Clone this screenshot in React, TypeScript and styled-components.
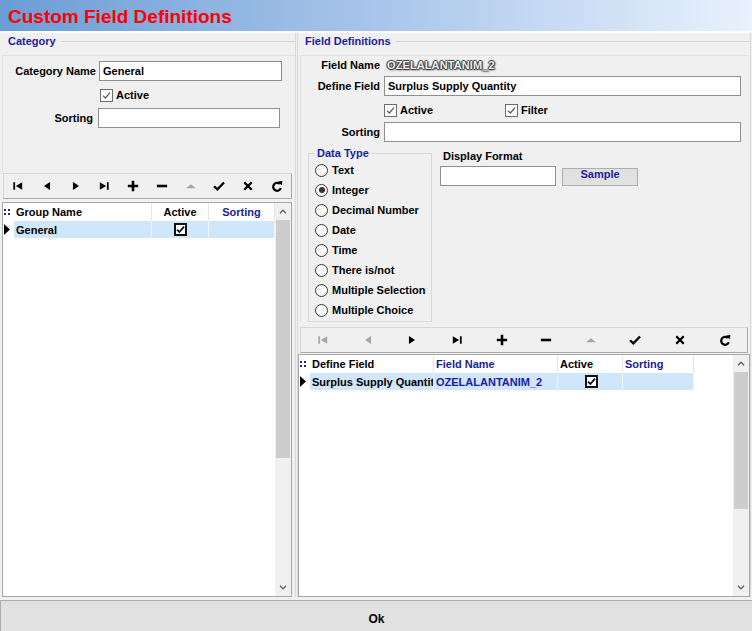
import React from "react";
import styled, { createGlobalStyle } from "styled-components";

const NAVY = "#1c1c9e";
const FONT = `"Liberation Sans", Arial, sans-serif`;

const GlobalStyle = createGlobalStyle`
  html, body {
    margin: 0;
    padding: 0;
    background: #f0f0f0;
  }
  body {
    font-family: ${FONT};
    font-size: 11px;
    font-weight: bold;
    color: #000;
  }
  * {
    box-sizing: border-box;
  }
`;

const Window = styled.div`
  width: 752px;
  height: 631px;
  display: flex;
  flex-direction: column;
  overflow: hidden;
  background: #f0f0f0;
`;

const TitleBar = styled.header`
  flex: none;
  height: 33px;
  border-bottom: 2px solid #fff;
  background: linear-gradient(90deg, #6b9dd6 0%, #a8c5ea 50%, #e9f2fd 100%);
  display: flex;
  align-items: center;
  padding: 2px 0 0 8px;
  color: #ff0000;
  font-size: 19px;
  font-weight: bold;
`;

const Main = styled.main`
  flex: 1;
  min-height: 0;
  display: flex;
  padding-bottom: 3px;
`;

const Column = styled.section<{ $width?: number }>`
  display: flex;
  flex-direction: column;
  min-width: 0;
  ${(p) =>
    p.$width
      ? `width: ${p.$width}px; flex: none; padding-left: 2px;`
      : `flex: 1; margin: 0 1px 0 1px; border-left: 1px solid #d9d9d9;`}
  border-right: 1px solid #d9d9d9;
`;

const SectionTitle = styled.div<{ $indent: number }>`
  flex: none;
  height: 16px;
  display: flex;
  align-items: center;
  padding-left: ${(p) => p.$indent}px;
  color: ${NAVY};
  &::after {
    content: "";
    flex: 1;
    height: 1px;
    margin-left: 5px;
    background: #d6d6d6;
  }
`;

const FormPanel = styled.div<{ $inset: number; $height?: number }>`
  flex: none;
  margin: 6px ${(p) => p.$inset}px 0 ${(p) => p.$inset}px;
  border-top: 1px solid #e2e2e2;
  border-left: 1px solid #e2e2e2;
  padding-top: ${(p) => (p.$height ? 5 : 2)}px;
  ${(p) => (p.$height ? `height: ${p.$height}px;` : "")}
`;

const FieldRow = styled.div<{ $label: number; $gap: number; $input?: number; $top?: number }>`
  display: grid;
  grid-template-columns: ${(p) => p.$label}px ${(p) => (p.$input ? `${p.$input}px` : "auto")};
  column-gap: ${(p) => p.$gap}px;
  align-items: center;
  min-height: 14px;
  margin-top: ${(p) => p.$top ?? 0}px;
`;

const Label = styled.span`
  text-align: right;
  white-space: nowrap;
`;

const TextBox = styled.input<{ $width?: number }>`
  height: 20px;
  ${(p) => (p.$width ? `width: ${p.$width}px;` : "width: 100%;")}
  margin: 0;
  padding: 0 3px;
  border: 1px solid #8f8f8f;
  background: #fff;
  font: bold 11px ${FONT};
  color: #000;
  outline: none;
`;

const EmbossedValue = styled.span`
  color: #f2f2f2;
  letter-spacing: 0.1px;
  text-shadow: 1px 0 1px #333, -1px 0 1px #333, 0 1px 1px #333, 0 -1px 1px #333, 1px 1px 2px #555;
`;

const CheckRow = styled.div<{ $indent: number; $top: number }>`
  display: flex;
  align-items: center;
  height: 14px;
  margin-top: ${(p) => p.$top}px;
  padding-left: ${(p) => p.$indent}px;
`;

const CheckItem = styled.label<{ $width?: number }>`
  display: flex;
  align-items: center;
  gap: 3px;
  ${(p) => (p.$width ? `width: ${p.$width}px;` : "")}
`;

const CheckBox = styled.span<{ $strong?: boolean }>`
  width: 13px;
  height: 13px;
  flex: none;
  display: inline-flex;
  align-items: center;
  justify-content: center;
  background: #fff;
  border: ${(p) => (p.$strong ? "2px solid #111" : "1px solid #6d6d6d")};
`;

const LowerArea = styled.div`
  display: flex;
  margin-top: 5px;
  padding-left: 7px;
`;

const TypeBox = styled.fieldset`
  width: 124px;
  margin: 0;
  padding: 0 0 1px 6px;
  border: 1px solid #d8d8d8;
`;

const TypeLegend = styled.legend`
  padding: 0 2px;
  line-height: 13px;
  color: ${NAVY};
`;

const RadioItem = styled.label`
  height: 20px;
  display: flex;
  align-items: center;
  gap: 4px;
  white-space: nowrap;
`;

const RadioDot = styled.span<{ $on?: boolean }>`
  width: 13px;
  height: 13px;
  flex: none;
  border-radius: 50%;
  border: 1px solid #333;
  background: #fff;
  display: inline-flex;
  align-items: center;
  justify-content: center;
  &::after {
    content: "";
    width: 6px;
    height: 6px;
    border-radius: 50%;
    background: ${(p) => (p.$on ? "#333" : "transparent")};
  }
`;

const FormatArea = styled.div`
  margin-left: 8px;
  display: flex;
  flex-direction: column;
`;

const FormatLabel = styled.span`
  margin-top: 2px;
  padding-left: 3px;
  line-height: 14px;
`;

const FormatRow = styled.div`
  display: flex;
  align-items: flex-start;
  gap: 6px;
  margin-top: 3px;
`;

const SampleButton = styled.button`
  width: 76px;
  height: 18px;
  margin-top: 2px;
  padding: 0;
  border: 1px solid #adadad;
  background: #e1e1e1;
  color: ${NAVY};
  font: bold 11px ${FONT};
  display: flex;
  align-items: flex-start;
  justify-content: center;
  line-height: 8px;
  padding-top: 1px;
`;

const Navigator = styled.div<{ $margin: string; $height: number }>`
  flex: none;
  display: flex;
  height: ${(p) => p.$height}px;
  margin: ${(p) => p.$margin};
  border: 1px solid #d6d6d6;
  border-right-color: #a9a9a9;
  border-bottom-color: #a9a9a9;
  background: #f0f0f0;
`;

const NavButton = styled.div<{ $off?: boolean }>`
  flex: 1;
  display: flex;
  align-items: center;
  justify-content: center;
  color: ${(p) => (p.$off ? "#a6a6a6" : "#000")};
`;

const GridBox = styled.div<{ $top: number; $right: number }>`
  flex: 1;
  min-height: 0;
  display: flex;
  margin: ${(p) => p.$top}px ${(p) => p.$right}px 0 0;
  border: 1px solid #a8a8a8;
  background: #fff;
`;

const GridBody = styled.div`
  flex: 1;
  min-width: 0;
  display: flex;
  flex-direction: column;
`;

const GridRow = styled.div<{ $cols: string; $height: number }>`
  display: grid;
  grid-template-columns: ${(p) => p.$cols};
  height: ${(p) => p.$height}px;
`;

const GridCell = styled.div<{ $align?: string; $color?: string; $bg?: string; $line?: string }>`
  display: flex;
  align-items: center;
  justify-content: ${(p) => (p.$align === "center" ? "center" : "flex-start")};
  padding-left: ${(p) => (p.$align === "center" ? 0 : 2)}px;
  overflow: hidden;
  white-space: nowrap;
  color: ${(p) => p.$color ?? "#000"};
  background: ${(p) => p.$bg ?? "transparent"};
  border-right: 1px solid ${(p) => p.$line ?? "#e6e6e6"};
`;

const Indicator = styled.div`
  display: flex;
  align-items: center;
  padding-left: 1px;
`;

const CenterBox = styled.span`
  flex: 1;
  display: flex;
  justify-content: center;
`;

const ScrollTrack = styled.div`
  width: 16px;
  flex: none;
  display: flex;
  flex-direction: column;
  background: #f0f0f0;
`;

const ScrollArrow = styled.div`
  height: 17px;
  flex: none;
  display: flex;
  align-items: center;
  justify-content: center;
`;

const ScrollThumb = styled.div<{ $size: number }>`
  flex: none;
  height: ${(p) => p.$size}px;
  margin: 0 1px;
  background: #cdcdcd;
`;

const ScrollGap = styled.div`
  flex: 1;
`;

const Footer = styled.footer`
  flex: none;
  height: 36px;
  margin-bottom: -5px;
  display: flex;
  align-items: center;
  justify-content: center;
  border-top: 1px solid #adadad;
  border-left: 1px solid #adadad;
  background: #e1e1e1;
  font-size: 12px;
`;

/* ---------- drawings ---------- */

const Tick = ({ strong }: { strong?: boolean }) => (
  <svg width="9" height="9" viewBox="0 0 9 9">
    <path
      d="M1 4.6 L3.4 7 L8 1.6"
      fill="none"
      stroke={strong ? "#111" : "#555"}
      strokeWidth={strong ? 1.8 : 1.2}
    />
  </svg>
);

const Check = ({ strong }: { strong?: boolean }) => (
  <CheckBox $strong={strong}>
    <Tick strong={strong} />
  </CheckBox>
);

const icons: Record<string, React.ReactNode> = {
  first: (
    <>
      <rect x="2" y="2.8" width="1.5" height="6.4" />
      <polygon points="9.6,2.8 4.2,6 9.6,9.2" />
    </>
  ),
  prev: <polygon points="8.6,2.6 3.4,6 8.6,9.4" />,
  next: <polygon points="3.4,2.6 8.6,6 3.4,9.4" />,
  last: (
    <>
      <polygon points="2.4,2.8 7.8,6 2.4,9.2" />
      <rect x="8.5" y="2.8" width="1.5" height="6.4" />
    </>
  ),
  plus: <path d="M4.9 1.6h2.2v3.3h3.3v2.2H7.1v3.3H4.9V7.1H1.6V4.9h3.3z" />,
  minus: <rect x="1.6" y="4.9" width="8.8" height="2.2" />,
  post: <polygon points="1.8,8 6,4.4 10.2,8" />,
  ok: <path d="M1.8 6.2 L4.6 8.9 L10.3 3" fill="none" stroke="currentColor" strokeWidth="1.9" />,
  cancel: (
    <path d="M2.8 2.8 L9.2 9.2 M9.2 2.8 L2.8 9.2" fill="none" stroke="currentColor" strokeWidth="2" />
  ),
  refresh: (
    <>
      <path d="M8.4 4.2 A3.4 3.4 0 1 0 9.3 7.9" fill="none" stroke="currentColor" strokeWidth="1.9" />
      <polygon points="6.8,2.2 10.6,1.8 10.1,5.6" />
    </>
  ),
};

const NavIcon = ({ name }: { name: string }) => (
  <svg width="14" height="14" viewBox="0 0 12 12" fill="currentColor">
    {icons[name]}
  </svg>
);

const NAV_ORDER = ["first", "prev", "next", "last", "plus", "minus", "post", "ok", "cancel", "refresh"];

const DbNavigator = ({ disabled, margin, height }: { disabled: string[]; margin: string; height: number }) => (
  <Navigator $margin={margin} $height={height}>
    {NAV_ORDER.map((n) => (
      <NavButton key={n} $off={disabled.includes(n)}>
        <NavIcon name={n} />
      </NavButton>
    ))}
  </Navigator>
);

const Chevron = ({ up }: { up?: boolean }) => (
  <svg width="8" height="5" viewBox="0 0 8 5">
    <path d={up ? "M1 4.2 L4 1.2 L7 4.2" : "M1 0.8 L4 3.8 L7 0.8"} fill="none" stroke="#606060" strokeWidth="1.3" />
  </svg>
);

const GripDots = () => (
  <svg width="8" height="8" viewBox="0 0 8 8" fill="#23237a">
    <rect x="0" y="1" width="2" height="2" />
    <rect x="4" y="1" width="2" height="2" />
    <rect x="0" y="5" width="2" height="2" />
    <rect x="4" y="5" width="2" height="2" />
  </svg>
);

const RowPointer = () => (
  <svg width="6" height="11" viewBox="0 0 6 11">
    <polygon points="0,0 6,5.5 0,11" fill="#000" />
  </svg>
);

/* ---------- grid ---------- */

type GridColumn = {
  title: string;
  width: number;
  headBlue?: boolean;
  align?: "center";
};

type GridCellData = { content: React.ReactNode; blue?: boolean };

const SELECTED = "#cfe6fb";

const DataGrid = ({
  columns,
  row,
  thumb,
  top,
  right,
}: {
  columns: GridColumn[];
  row: GridCellData[];
  thumb: number;
  top: number;
  right: number;
}) => {
  const template = `11px ${columns.map((c) => `${c.width}px`).join(" ")}`;
  return (
    <GridBox $top={top} $right={right}>
      <GridBody>
        <GridRow $cols={template} $height={18}>
          <Indicator>
            <GripDots />
          </Indicator>
          {columns.map((c) => (
            <GridCell key={c.title} $align={c.align} $color={c.headBlue ? NAVY : "#000"}>
              {c.title}
            </GridCell>
          ))}
        </GridRow>
        <GridRow $cols={template} $height={17}>
          <Indicator>
            <RowPointer />
          </Indicator>
          {row.map((cell, i) => (
            <GridCell
              key={i}
              $align={columns[i].align}
              $color={cell.blue ? NAVY : "#000"}
              $bg={SELECTED}
              $line="#eef5fc"
            >
              {cell.content}
            </GridCell>
          ))}
        </GridRow>
      </GridBody>
      <ScrollTrack>
        <ScrollArrow>
          <Chevron up />
        </ScrollArrow>
        <ScrollThumb $size={thumb} />
        <ScrollGap />
        <ScrollArrow>
          <Chevron />
        </ScrollArrow>
      </ScrollTrack>
    </GridBox>
  );
};

const categoryColumns: GridColumn[] = [
  { title: "Group Name", width: 138 },
  { title: "Active", width: 57, align: "center" },
  { title: "Sorting", width: 66, align: "center", headBlue: true },
];

const fieldColumns: GridColumn[] = [
  { title: "Define Field", width: 124 },
  { title: "Field Name", width: 124, headBlue: true },
  { title: "Active", width: 65 },
  { title: "Sorting", width: 71, headBlue: true },
];

const DATA_TYPES = [
  "Text",
  "Integer",
  "Decimal Number",
  "Date",
  "Time",
  "There is/not",
  "Multiple Selection",
  "Multiple Choice",
];

export default function App() {
  return (
    <>
      <GlobalStyle />
      <Window>
        <TitleBar>Custom Field Definitions</TitleBar>
        <Main>
          <Column $width={296}>
            <SectionTitle $indent={6}>Category</SectionTitle>
            <FormPanel $inset={0} $height={118}>
              <FieldRow $label={93} $gap={3} $input={183}>
                <Label>Category Name</Label>
                <TextBox readOnly defaultValue="General" />
              </FieldRow>
              <CheckRow $indent={97} $top={7}>
                <CheckItem>
                  <Check />
                  Active
                </CheckItem>
              </CheckRow>
              <FieldRow $label={90} $gap={5} $input={182} $top={6}>
                <Label>Sorting</Label>
                <TextBox readOnly defaultValue="" />
              </FieldRow>
            </FormPanel>
            <DbNavigator disabled={["post"]} margin="0 3px 0 1px" height={26} />
            <DataGrid
              columns={categoryColumns}
              row={[{ content: "General" }, { content: <Check strong /> }, { content: "" }]}
              thumb={238}
              top={3}
              right={3}
            />
          </Column>

          <Column>
            <SectionTitle $indent={7}>Field Definitions</SectionTitle>
            <FormPanel $inset={2}>
              <FieldRow $label={79} $gap={7}>
                <Label>Field Name</Label>
                <EmbossedValue>OZELALANTANIM_2</EmbossedValue>
              </FieldRow>
              <FieldRow $label={79} $gap={4} $input={357} $top={4}>
                <Label>Define Field</Label>
                <TextBox readOnly defaultValue="Surplus Supply Quantity" />
              </FieldRow>
              <CheckRow $indent={83} $top={7}>
                <CheckItem $width={121}>
                  <Check />
                  Active
                </CheckItem>
                <CheckItem>
                  <Check />
                  Filter
                </CheckItem>
              </CheckRow>
              <FieldRow $label={79} $gap={4} $input={357} $top={5}>
                <Label>Sorting</Label>
                <TextBox readOnly defaultValue="" />
              </FieldRow>
              <LowerArea>
                <TypeBox>
                  <TypeLegend>Data Type</TypeLegend>
                  {DATA_TYPES.map((t) => (
                    <RadioItem key={t}>
                      <RadioDot $on={t === "Integer"} />
                      {t}
                    </RadioItem>
                  ))}
                </TypeBox>
                <FormatArea>
                  <FormatLabel>Display Format</FormatLabel>
                  <FormatRow>
                    <TextBox readOnly defaultValue="" $width={116} />
                    <SampleButton>Sample</SampleButton>
                  </FormatRow>
                </FormatArea>
              </LowerArea>
            </FormPanel>
            <DbNavigator disabled={["first", "prev", "post"]} margin="5px 2px 0 2px" height={26} />
            <DataGrid
              columns={fieldColumns}
              row={[
                { content: "Surplus Supply Quantity" },
                { content: "OZELALANTANIM_2", blue: true },
                {
                  content: (
                    <CenterBox>
                      <Check strong />
                    </CenterBox>
                  ),
                },
                { content: "" },
              ]}
              thumb={137}
              top={1}
              right={0}
            />
          </Column>
        </Main>
        <Footer>Ok</Footer>
      </Window>
    </>
  );
}
